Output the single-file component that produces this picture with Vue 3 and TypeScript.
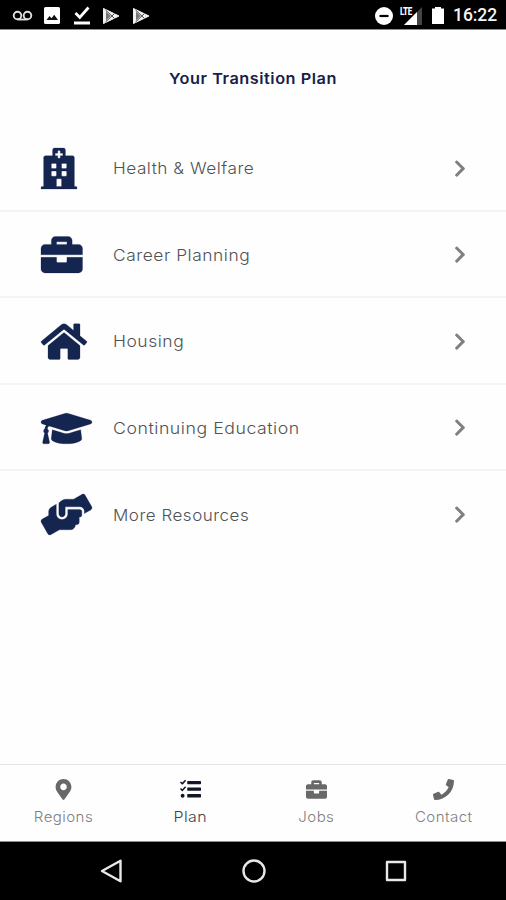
<script setup lang="ts">
interface Glyph { w: number; h: number; d: string }
interface Row { label: string; icon: string; size: string }
interface Tab { label: string; icon: string; active?: boolean }

const glyphs: Record<string, Glyph> = {
  hospital: { w: 448, h: 512, d: 'M448 492v20H0v-20c0-6.627 5.373-12 12-12h20V120c0-13.255 10.745-24 24-24h88V24c0-13.255 10.745-24 24-24h112c13.255 0 24 10.745 24 24v72h88c13.255 0 24 10.745 24 24v360h20c6.627 0 12 5.373 12 12zM308 192h-40c-6.627 0-12 5.373-12 12v40c0 6.627 5.373 12 12 12h40c6.627 0 12-5.373 12-12v-40c0-6.627-5.373-12-12-12zm-168 64h40c6.627 0 12-5.373 12-12v-40c0-6.627-5.373-12-12-12h-40c-6.627 0-12 5.373-12 12v40c0 6.627 5.373 12 12 12zm104 128h-40c-6.627 0-12 5.373-12 12v84h64v-84c0-6.627-5.373-12-12-12zm64-96h-40c-6.627 0-12 5.373-12 12v40c0 6.627 5.373 12 12 12h40c6.627 0 12-5.373 12-12v-40c0-6.627-5.373-12-12-12zm-116 12c0-6.627-5.373-12-12-12h-40c-6.627 0-12 5.373-12 12v40c0 6.627 5.373 12 12 12h40c6.627 0 12-5.373 12-12v-40zM182 96h26v26a6 6 0 0 0 6 6h20a6 6 0 0 0 6-6V96h26a6 6 0 0 0 6-6V70a6 6 0 0 0-6-6h-26V38a6 6 0 0 0-6-6h-20a6 6 0 0 0-6 6v26h-26a6 6 0 0 0-6 6v20a6 6 0 0 0 6 6z' },
  briefcase: { w: 512, h: 512, d: 'M320 336c0 8.84-7.16 16-16 16h-96c-8.84 0-16-7.16-16-16v-48H0v144c0 25.6 22.4 48 48 48h416c25.6 0 48-22.4 48-48V288H320v48zm144-208h-80V80c0-25.6-22.4-48-48-48H176c-25.6 0-48 22.4-48 48v48H48c-25.6 0-48 22.4-48 48v80h512v-80c0-25.6-22.4-48-48-48zm-144 0H192V96h128v32z' },
  home: { w: 576, h: 512, d: 'M488 312.7V456c0 13.3-10.7 24-24 24H348c-6.6 0-12-5.4-12-12V356c0-6.6-5.4-12-12-12h-72c-6.6 0-12 5.4-12 12v112c0 6.6-5.4 12-12 12H112c-13.3 0-24-10.7-24-24V312.7c0-3.6 1.6-7 4.4-9.3l188-154.8c4.4-3.6 10.8-3.6 15.3 0l188 154.8c2.7 2.3 4.3 5.7 4.3 9.3zm83.6-60.9L488 182.9V44.4c0-6.6-5.4-12-12-12h-56c-6.6 0-12 5.4-12 12V117l-89.5-73.7c-17.7-14.6-43.3-14.6-61 0L4.4 251.8c-5.1 4.2-5.8 11.8-1.6 16.9l25.5 31c4.2 5.1 11.8 5.8 16.9 1.6l235.2-193.7c4.4-3.6 10.8-3.6 15.3 0l235.2 193.7c5.1 4.2 12.7 3.5 16.9-1.6l25.5-31c4.2-5.2 3.4-12.7-1.7-16.9z' },
  graduation: { w: 640, h: 512, d: 'M622.34 153.2L343.4 67.5c-15.2-4.67-31.6-4.67-46.79 0L17.66 153.2c-23.54 7.23-23.54 38.36 0 45.59l48.63 14.94c-10.67 13.19-17.23 29.28-17.88 46.9C38.78 266.15 32 276.11 32 288c0 10.78 5.68 19.85 13.86 25.65L20.33 428.53C18.11 438.52 25.71 448 35.94 448h56.11c10.24 0 17.84-9.48 15.62-19.47L82.14 313.65C90.32 307.85 96 298.78 96 288c0-11.57-6.47-21.25-15.66-26.87.76-15.02 8.44-28.3 20.69-36.72L296.6 284.5c9.06 2.78 26.44 6.25 46.79 0l278.95-85.7c23.55-7.24 23.55-38.36 0-45.6zM352.79 315.09c-28.53 8.76-52.84 3.92-65.59 0l-145.02-44.55L128 384c0 35.35 85.96 64 192 64s192-28.65 192-64l-14.18-113.47-145.03 44.56z' },
  hands: { w: 640, h: 512, d: 'M488 192H336v56c0 39.7-32.3 72-72 72s-72-32.3-72-72V126.4l-64.9 39C107.8 176.9 96 197.8 96 220.2v47.3l-80 46.2C.7 322.5-4.6 342.1 4.3 357.4l80 138.6c8.8 15.3 28.4 20.5 43.7 11.7L231.4 448H368c35.3 0 64-28.7 64-64h16c17.7 0 32-14.3 32-32v-64h8c13.3 0 24-10.7 24-24v-48c0-13.3-10.7-24-24-24zm147.7-37.4L555.7 16C546.9.7 527.3-4.5 512 4.3L408.6 64H306.4c-12 0-23.7 3.4-33.9 9.7L239 94.6c-9.4 5.8-15 16.1-15 27.1V248c0 22.1 17.9 40 40 40s40-17.9 40-40v-88h184c30.9 0 56 25.1 56 56v28.5l80-46.2c15.3-8.9 20.5-28.4 11.7-43.7z' },
  marker: { w: 384, h: 512, d: 'M172.268 501.67C26.97 291.031 0 269.413 0 192 0 85.961 85.961 0 192 0s192 85.961 192 192c0 77.413-26.97 99.031-172.268 309.67-9.535 13.774-29.93 13.773-39.464 0zM192 272c44.183 0 80-35.817 80-80s-35.817-80-80-80-80 35.817-80 80 35.817 80 80 80z' },
  tasks: { w: 512, h: 512, d: 'M192 48h304q16 0 16 16v48q0 16-16 16H192q-16 0-16-16V64q0-16 16-16zM192 208h304q16 0 16 16v48q0 16-16 16H192q-16 0-16-16v-48q0-16 16-16zM192 368h304q16 0 16 16v48q0 16-16 16H192q-16 0-16-16v-48q0-16 16-16zM0 82l24-24 32 30 68-70 26 26L68 132q-12 10-24 0zM0 242l24-24 32 30 68-70 26 26-82 88q-12 10-24 0zM64 360a48 48 0 1 1 0 96 48 48 0 0 1 0-96z' },
  phone: { w: 512, h: 512, d: 'M493.4 24.6l-104-24c-11.3-2.6-22.9 3.3-27.5 13.9l-48 112c-4.2 9.8-1.4 21.3 6.9 28l60.6 49.6c-36 76.7-98.9 140.5-177.2 177.2l-49.6-60.6c-6.8-8.3-18.2-11.1-28-6.9l-112 48C3.9 366.5-2 378.1.6 389.4l24 104C27.1 504.2 36.7 512 48 512c256.1 0 464-207.5 464-464 0-11.2-7.7-20.9-18.6-23.4z' },
  chevron: { w: 320, h: 512, d: 'M285.476 272.971L91.132 467.314c-9.373 9.373-24.569 9.373-33.941 0l-22.667-22.667c-9.357-9.357-9.375-24.522-.04-33.901L188.505 256 34.484 101.255c-9.335-9.379-9.317-24.544.04-33.901l22.667-22.667c9.373-9.373 24.569-9.373 33.941 0L285.475 239.03c9.373 9.372 9.373 24.568.001 33.941z' },
}

const rows: Row[] = [
  { label: 'Health & Welfare', icon: 'hospital', size: 'health' },
  { label: 'Career Planning', icon: 'briefcase', size: 'career' },
  { label: 'Housing', icon: 'home', size: 'housing' },
  { label: 'Continuing Education', icon: 'graduation', size: 'education' },
  { label: 'More Resources', icon: 'hands', size: 'resources' },
]

const tabs: Tab[] = [
  { label: 'Regions', icon: 'marker' },
  { label: 'Plan', icon: 'tasks', active: true },
  { label: 'Jobs', icon: 'briefcase' },
  { label: 'Contact', icon: 'phone' },
]

const box = (name: string): string => `0 0 ${glyphs[name].w} ${glyphs[name].h}`
</script>

<template>
  <div class="screen">
    <header class="status">
      <div class="notices">
        <svg class="voicemail" viewBox="0 0 20 12"><g fill="none" stroke="#e0e0e0" stroke-width="1.9"><circle cx="5" cy="5.5" r="3.8" /><circle cx="15" cy="5.5" r="3.8" /><path d="M5 9.5h10" /></g></svg>
        <svg class="photo" viewBox="0 0 16 17"><rect width="16" height="17" rx="1.5" fill="#fff" /><path d="M2.500 13l3-4 2 2.300 2.700-3.500 3.800 5.200z" fill="#111" /></svg>
        <svg class="done" viewBox="0 0 16 19"><path d="M1.500 7l4.300 4.500L14.500 1.500" fill="none" stroke="#fff" stroke-width="2.8" /><path d="M0 15.500h16v3H0z" fill="#fff" /></svg>
        <svg v-for="n in 2" :key="n" class="play" viewBox="0 0 18 18"><path d="M1.500 1.500L17 9 1.500 16.500z" fill="#f2f2f2" stroke="#f2f2f2" stroke-linejoin="round" /><path d="M4 4.500v9l4.500-4.500z" fill="#777" /><path d="M3.500 3l9 8.500M3.500 15l9-8.500" fill="none" stroke="#444" stroke-width="1" /></svg>
      </div>
      <div class="system">
        <svg class="dnd" viewBox="0 0 18 18"><circle cx="9" cy="9" r="9" fill="#fff" /><path d="M4.500 9h9" stroke="#000" stroke-width="2.2" /></svg>
        <span class="signal">
          <svg viewBox="0 0 18 18"><path d="M18 0v18H0z" fill="#444" /><path d="M13 5v13H0z" fill="#fff" /></svg>
          <span class="lte">LTE</span>
        </span>
        <svg class="battery" viewBox="0 0 12 17"><path d="M3 0h6v1.500h3V17H0V1.500h3z" fill="#fff" /></svg>
        <time class="clock">16:22</time>
      </div>
    </header>

    <main class="content">
      <h1 class="title">Your Transition Plan</h1>
      <ul class="plan">
        <li v-for="row in rows" :key="row.label" class="row">
          <span class="row-icon"><svg :class="row.size" :viewBox="box(row.icon)"><path :d="glyphs[row.icon].d" /></svg></span>
          <span class="row-label" :class="row.size + '-text'">{{ row.label }}</span>
          <svg class="chevron" :viewBox="box('chevron')"><path :d="glyphs.chevron.d" /></svg>
        </li>
      </ul>
    </main>

    <nav class="tabs">
      <a v-for="tab in tabs" :key="tab.label" class="tab" :class="{ active: tab.active }">
        <svg class="tab-icon" :viewBox="box(tab.icon)"><path :d="glyphs[tab.icon].d" /></svg>
        <span class="tab-label">{{ tab.label }}</span>
      </a>
    </nav>

    <footer class="system-nav">
      <svg viewBox="0 0 24 24"><path d="M20.500 1.700v20.600L2 12z" /></svg>
      <svg viewBox="0 0 24 24"><circle cx="12" cy="12" r="10.5" /></svg>
      <svg viewBox="0 0 24 24"><rect x="3" y="3" width="18" height="18" /></svg>
    </footer>
  </div>
</template>

<style>
body { margin: 0; background: #fefefe; }
</style>

<style scoped>
.screen { display: flex; flex-direction: column; width: 506px; height: 900px; background: #fefefe; font-family: Inter, "Liberation Sans", sans-serif; overflow: hidden; }
svg { display: block; flex: none; }
.status { display: flex; justify-content: space-between; height: 29px; box-sizing: border-box; background: #000; box-shadow: 0 1px 0 #8c8c8c; padding: 0 9px 0 12px; flex: none; }
.notices, .system { display: flex; align-items: center; height: 31px; }
.voicemail { width: 21px; height: 12px; margin-right: 11px; }
.photo { width: 16px; height: 17px; margin-right: 14px; }
.done { width: 16px; height: 19px; margin-right: 12px; }
.play { width: 18px; height: 18px; margin-right: 12px; }
.dnd { width: 18px; height: 18px; margin-right: 7px; }
.signal { position: relative; display: flex; width: 22px; height: 18px; justify-content: flex-end; margin-right: 10px; }
.signal svg { width: 18px; height: 18px; }
.lte { position: absolute; left: 0; top: 0; padding-right: 1px; background: #000; color: #fff; font: 800 10.5px/9px Roboto, sans-serif; letter-spacing: -0.6px; height: 9px; transform: scaleX(0.77); transform-origin: left; }
.battery { width: 12px; height: 17px; margin-right: 9px; }
.clock { font: 500 17.5px/31px Roboto, sans-serif; color: #f4f4f4; letter-spacing: -0.1px; }
.content { flex: 1; }
.title { margin: 0; padding-top: 38px; height: 58px; line-height: 23px; text-align: center; color: #17204a; font-size: 15px; font-weight: 600; letter-spacing: 0.5px; transform: scaleX(1.085); }
.plan { margin: 0; padding: 0; list-style: none; }
.row { display: flex; align-items: center; box-sizing: border-box; height: 86.6px; padding: 2px 40px 0 41px; border-bottom: 2px solid #f4f4f4; }
.row:last-child { border-bottom-color: transparent; }
.row-icon { width: 72px; flex: none; }
.row-icon svg { fill: #14264f; stroke: #10124a; stroke-width: 3; overflow: visible; }
.health { width: 36px; height: 41px; }
.career { width: 41.5px; height: 41.5px; }
.housing { width: 46px; height: 41px; }
.education, .resources { width: 51px; height: 41px; }
.row-label { flex: 1; color: #4f5356; font-size: 16.5px; font-weight: 300; letter-spacing: 0.5px; line-height: 24px; transform-origin: left; }
.health-text { transform: scaleX(1.042); }
.career-text { transform: scaleX(1.054); }
.housing-text { transform: scaleX(1.06); }
.education-text { transform: scaleX(1.073); }
.resources-text { transform: scaleX(1.03); }
.chevron { width: 12px; height: 19.2px; fill: #808080; }
.tabs { display: grid; grid-template-columns: repeat(4, 1fr); height: 78px; box-sizing: border-box; border-top: 1px solid #e4e4e4; flex: none; }
.tab { display: flex; flex-direction: column; align-items: center; padding: 14px 0 0 1px; color: #808080; font-size: 14.5px; font-weight: 300; line-height: 20px; letter-spacing: 0.4px; gap: 7px; }
.tab-label { transform: scaleX(1.04); }
.tab-icon { height: 21px; width: 21px; fill: #686868; }
.active { color: #3d4251; }
.active .tab-label { transform: scaleX(1.1); }
.active .tab-icon { fill: #111629; }
.system-nav { display: flex; justify-content: space-between; align-items: center; height: 58px; box-sizing: border-box; background: #000; box-shadow: 0 -1px 0 #8c8c8c; padding: 0 98px 0 100px; flex: none; }
.system-nav svg { width: 24px; height: 24px; fill: none; stroke: #e8e8e8; stroke-width: 2.4; stroke-linejoin: round; }
</style>
